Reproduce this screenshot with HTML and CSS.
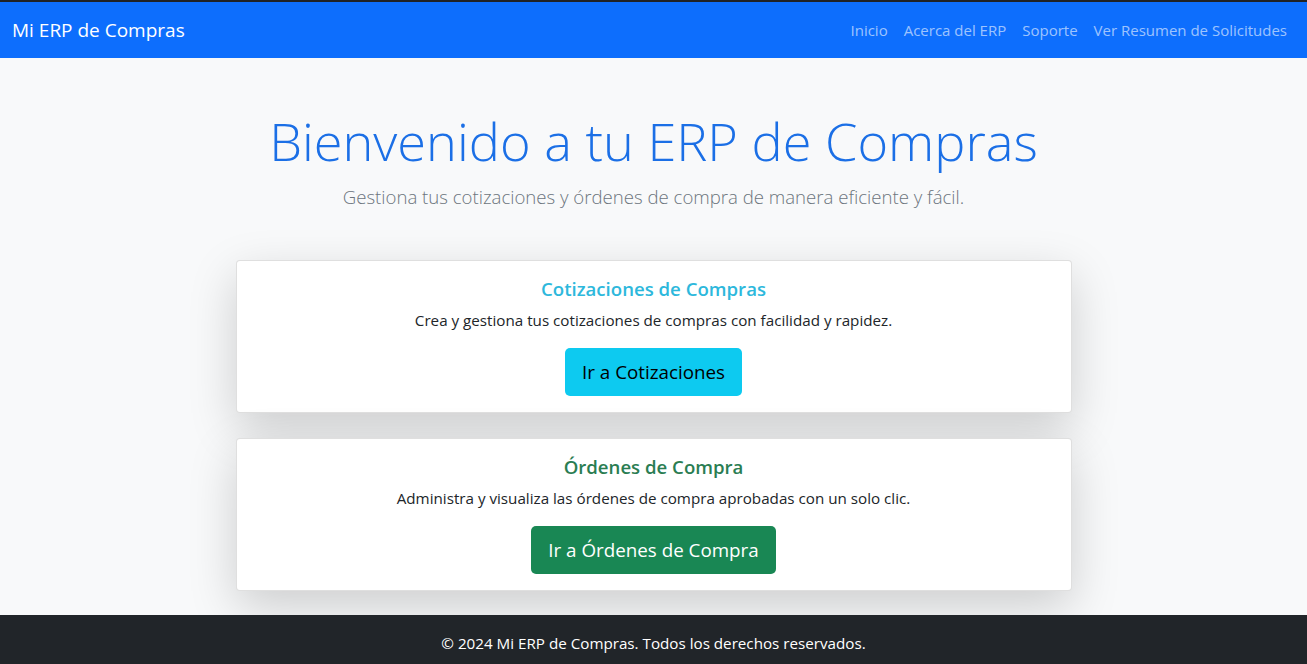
FILE: index.html
```html
<!DOCTYPE html>
<html lang="es">
<head>
<meta charset="utf-8">
<title>Mi ERP de Compras</title>
<link rel="stylesheet" href="styles.css">
</head>
<body>
<nav class="navbar">
  <a class="brand" href="#">Mi ERP de Compras</a>
  <ul class="nav">
    <li><a href="#">Inicio</a></li>
    <li><a href="#">Acerca del ERP</a></li>
    <li><a href="#">Soporte</a></li>
    <li><a href="#">Ver Resumen de Solicitudes</a></li>
  </ul>
</nav>
<main class="main">
  <header class="hero">
    <h1 class="display">Bienvenido a tu ERP de Compras</h1>
    <p class="lead">Gestiona tus cotizaciones y órdenes de compra de manera eficiente y fácil.</p>
  </header>
  <section class="cards">
    <div class="card">
      <h5 class="card-title info">Cotizaciones de Compras</h5>
      <p class="card-text">Crea y gestiona tus cotizaciones de compras con facilidad y rapidez.</p>
      <a class="btn btn-info" href="#">Ir a Cotizaciones</a>
    </div>
    <div class="card">
      <h5 class="card-title success">Órdenes de Compra</h5>
      <p class="card-text">Administra y visualiza las órdenes de compra aprobadas con un solo clic.</p>
      <a class="btn btn-success" href="#">Ir a Órdenes de Compra</a>
    </div>
  </section>
</main>
<footer class="footer">
  <p>© 2024 Mi ERP de Compras. Todos los derechos reservados.</p>
</footer>
</body>
</html>
```
FILE: styles.css
```css
* { box-sizing: border-box; }
html, body { margin: 0; padding: 0; }
body {
  font-family: "Open Sans", "Noto Sans", sans-serif;
  font-size: 16px;
  line-height: 1.5;
  color: #212529;
  background: #f8f9fa;
  height: 664px;
  display: flex;
  flex-direction: column;
  overflow: hidden;
}
a { text-decoration: none; }

.navbar {
  border-top: 2px solid #1f2226;
  background: #0d6efd;
  height: 58px;
  display: flex;
  align-items: center;
  justify-content: space-between;
  padding: 0 12px;
}
.brand {
  color: #fff;
  font-size: 19px;
  line-height: 30px;
}
.nav {
  list-style: none;
  margin: 0;
  padding: 0;
  display: flex;
}
.nav a {
  display: block;
  padding: 8px 8px;
  color: rgba(255,255,255,.6);
  font-size: 15px;
}

.main {
  flex: 1;
  display: flex;
  flex-direction: column;
  align-items: center;
}
.hero {
  text-align: center;
  margin-top: 50px;
}
.display {
  margin: 0 0 8px;
  font-size: 52.3px;
  font-weight: 300;
  line-height: 66px;
  color: #1b6fe6;
}
.lead {
  margin: 0;
  font-size: 18.6px;
  font-weight: 300;
  line-height: 30px;
  color: #6c757d;
}

.cards {
  margin-top: 48px;
  width: 836px;
  display: flex;
  flex-direction: column;
  gap: 25px;
}
.card {
  background: #fff;
  border: 1px solid rgba(0,0,0,.125);
  border-radius: 4px;
  box-shadow: 0 16px 48px rgba(0,0,0,.175);
  padding: 16px 16px 16px;
  text-align: center;
  height: 153px;
}
.card-title {
  margin: 0 0 7px;
  font-size: 18.6px;
  font-weight: 600;
  line-height: 24px;
}
.card-title.info { color: #2db8dc; }
.card-title.success { color: #2a7d52; }
.card-text {
  margin: 0 0 16px;
  font-size: 15.2px;
  line-height: 24px;
}
.btn {
  display: inline-block;
  padding: 8px 16px;
  font-size: 18.8px;
  line-height: 30px;
  border-radius: 5px;
  border: 1px solid transparent;
}
.btn-info { background: #0dcaf0; color: #000; }
.btn-success { background: #198754; color: #fff; }

.footer {
  background: #212529;
  color: #fff;
  height: 49px;
  display: flex;
  justify-content: center;
  padding-top: 16px;
}
.footer p { margin: 0; font-size: 15.2px; line-height: 24px; }
```
